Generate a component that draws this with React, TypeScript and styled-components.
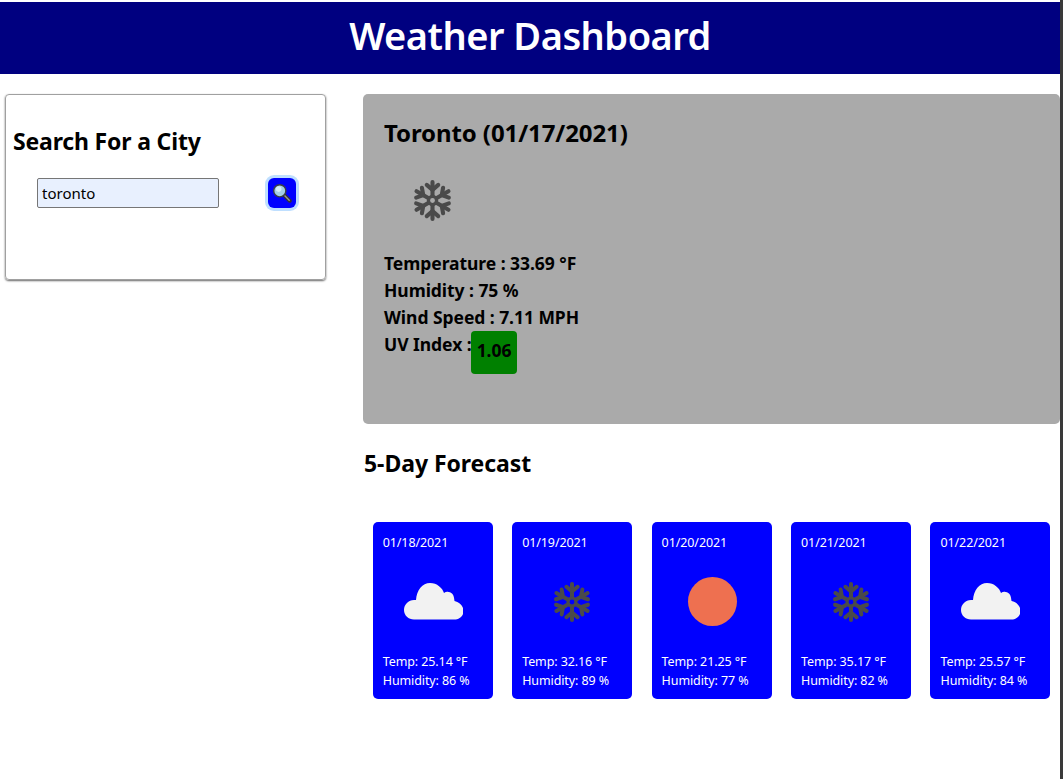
import React from 'react';
import styled, { createGlobalStyle } from 'styled-components';

const GlobalStyle = createGlobalStyle`
  html, body {
    margin: 0;
    padding: 0;
    background: #fff;
  }
  body {
    font-family: "Noto Sans", "Open Sans", sans-serif;
    color: #000;
  }
  * {
    box-sizing: border-box;
  }
`;

interface ForecastDay {
  date: string;
  temp: string;
  humidity: string;
  icon: 'cloud' | 'snow' | 'sun';
}

const forecast: ForecastDay[] = [
  { date: '01/18/2021', temp: '25.14', humidity: '86', icon: 'cloud' },
  { date: '01/19/2021', temp: '32.16', humidity: '89', icon: 'snow' },
  { date: '01/20/2021', temp: '21.25', humidity: '77', icon: 'sun' },
  { date: '01/21/2021', temp: '35.17', humidity: '82', icon: 'snow' },
  { date: '01/22/2021', temp: '25.57', humidity: '84', icon: 'cloud' },
];

const SnowIcon: React.FC<{ size: number }> = ({ size }) => (
  <svg width={size} height={size} viewBox="-25 -25 50 50" fill="none" stroke="#4a4a4a" strokeWidth="5" strokeLinecap="round">
    {[0, 60, 120, 180, 240, 300].map((a) => (
      <g key={a} transform={`rotate(${a})`}>
        <path d="M0 -6V-22.500" />
        <path d="M0 -13L-7 -19M0 -13L7 -19" />
      </g>
    ))}
    <circle r="5" strokeWidth="4" />
  </svg>
);

const CloudIcon = () => (
  <svg width="60" height="38" viewBox="-1 1 60 38">
    <path
      fill="#f2f2f2"
      d="M10 37.500C4.500 37.500 0 33.500 0 28C0 22.500 4.500 18 10 18C10.500 18 11.500 18 12 18C12.500 8 18.500 1 26 1C33 1 38.500 6 40 11C41.500 10 43 9.500 44.500 10C49 10.500 50 14 50.500 19C55.500 20 59.500 24 59.500 29C59.500 34 55.500 37.500 50 37.500Z"
    />
  </svg>
);

const WeatherIcon: React.FC<{ icon: ForecastDay['icon'] }> = ({ icon }) => {
  if (icon === 'cloud') return <CloudIcon />;
  if (icon === 'snow') return <SnowIcon size={40} />;
  return <Sun />;
};

const SearchGlyph = () => (
  <svg width="20" height="20" viewBox="0 0 18 18">
    <path d="M10.500 10.500L16 16" stroke="#333" strokeWidth="3.500" strokeLinecap="round" />
    <path d="M11.500 11.500L15.500 15.500" stroke="#9a9a9a" strokeWidth="1.200" strokeLinecap="round" />
    <circle cx="7" cy="7" r="5.500" fill="#a5cfe6" stroke="#3a3f44" strokeWidth="1.300" />
    <circle cx="6" cy="5.500" r="2.500" fill="#d5ecf7" />
  </svg>
);

export default function App() {
  return (
    <Page>
      <GlobalStyle />
      <Header>Weather Dashboard</Header>
      <Content>
        <SearchCard>
          <SearchTitle>Search For a City</SearchTitle>
          <SearchRow>
            <CityInput defaultValue="toronto" />
            <SearchButton aria-label="Search">
              <SearchGlyph />
            </SearchButton>
          </SearchRow>
        </SearchCard>
        <Main>
          <CurrentPanel>
            <CityTitle>Toronto (01/17/2021)</CityTitle>
            <CurrentIcon>
              <SnowIcon size={41} />
            </CurrentIcon>
            <Stat>Temperature : 33.69 °F</Stat>
            <Stat>Humidity : 75 %</Stat>
            <Stat>Wind Speed : 7.11 MPH</Stat>
            <UvStat>
              <UvLabel>UV Index :</UvLabel>
              <UvBadge>1.06</UvBadge>
            </UvStat>
          </CurrentPanel>
          <ForecastTitle>5-Day Forecast</ForecastTitle>
          <ForecastRow>
            {forecast.map((day) => (
              <ForecastCard key={day.date}>
                <CardLine>{day.date}</CardLine>
                <CardIcon>
                  <WeatherIcon icon={day.icon} />
                </CardIcon>
                <CardLine>Temp: {day.temp} °F</CardLine>
                <CardLine>Humidity: {day.humidity} %</CardLine>
              </ForecastCard>
            ))}
          </ForecastRow>
        </Main>
      </Content>
    </Page>
  );
}

const Page = styled.div`
  width: 1063px;
  height: 779px;
  padding-top: 2px;
  overflow: hidden;
  border-right: 3px solid #3a3a3a;
`;

const Header = styled.header`
  height: 72px;
  background: #000080;
  color: #fff;
  font-size: 38px;
  font-weight: 600;
  line-height: 66px;
  text-align: center;
  letter-spacing: -0.5px;
`;

const Content = styled.div`
  display: grid;
  grid-template-columns: 321px 697.2px;
  column-gap: 37px;
  padding: 20px 0 0 5px;
`;

const SearchCard = styled.section`
  height: 186px;
  padding: 32px 7px 0;
  border-radius: 4px;
  border: 1px solid #a0a0a0;
  box-shadow: 0 1px 2px rgba(0, 0, 0, 0.6);
`;

const SearchTitle = styled.h2`
  margin: 0;
  font-size: 23px;
  font-weight: 700;
  line-height: 28px;
  letter-spacing: -0.17px;
`;

const SearchRow = styled.div`
  display: flex;
  align-items: center;
  justify-content: space-between;
  margin-top: 23px;
  padding: 0 22px 0 24px;
`;

const CityInput = styled.input`
  width: 182px;
  height: 30px;
  padding: 0 4px;
  border: 1px solid #767676;
  border-radius: 2px;
  background: #e8f0fe;
  font-family: inherit;
  font-size: 15px;
  color: #000;
  outline: none;
`;

const SearchButton = styled.button`
  display: flex;
  align-items: center;
  justify-content: center;
  width: 28px;
  height: 30px;
  padding: 0;
  border: none;
  border-radius: 6px;
  background: #0000ff;
  box-shadow: 0 0 0 3px #bfdfff;
`;

const Main = styled.main`
  display: flex;
  flex-direction: column;
`;

const CurrentPanel = styled.section`
  height: 330px;
  padding: 24px 21px 0;
  background: #aaaaaa;
  border-radius: 5px;
`;

const CityTitle = styled.h2`
  margin: 0;
  font-size: 24px;
  font-weight: 700;
  line-height: 30px;
  letter-spacing: -0.1px;
`;

const CurrentIcon = styled.div`
  display: flex;
  padding: 32px 0 29px 28px;
`;

const Stat = styled.p`
  margin: 0;
  font-size: 17.5px;
  font-weight: 700;
  line-height: 27px;
  letter-spacing: -0.05px;
`;

const UvStat = styled(Stat)`
  display: flex;
  align-items: flex-start;
`;

const UvLabel = styled.span`
  width: 87px;
  flex: none;
  white-space: nowrap;
`;

const UvBadge = styled.span`
  display: flex;
  align-items: center;
  justify-content: center;
  width: 46px;
  height: 43px;
  padding-bottom: 5px;
  background: #008000;
  border-radius: 4px;
`;

const ForecastTitle = styled.h3`
  margin: 23px 0 0 1px;
  font-size: 23px;
  font-weight: 700;
  line-height: 32px;
  letter-spacing: -0.05px;
`;

const ForecastRow = styled.div`
  display: flex;
  justify-content: space-around;
  margin-top: 43px;
`;

const ForecastCard = styled.article`
  width: 120px;
  height: 177px;
  padding: 11px 10px 0;
  background: #0000ff;
  border-radius: 5px;
  color: #fff;
`;

const CardLine = styled.div`
  font-size: 12.5px;
  line-height: 19px;
  letter-spacing: -0.1px;
`;

const CardIcon = styled.div`
  display: flex;
  align-items: center;
  justify-content: center;
  height: 100px;
`;

const Sun = styled.div`
  width: 49px;
  height: 49px;
  margin: 0 0 2px 1px;
  border-radius: 50%;
  background: #ee7050;
`;
